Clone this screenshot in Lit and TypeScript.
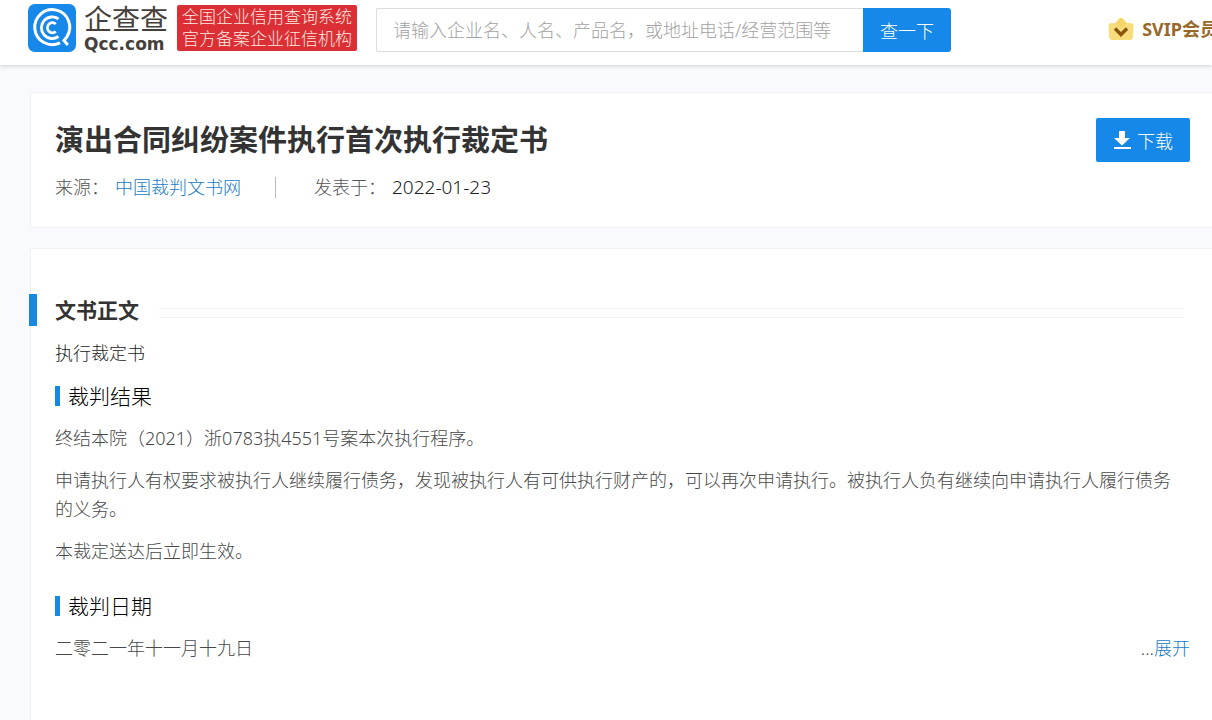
import { LitElement, html, css } from "lit";
import { customElement } from "lit/decorators.js";

@customElement("site-header")
class SiteHeader extends LitElement {
  static styles = css`
    :host {
      display: block;
      position: relative;
    }
    .bar {
      display: flex;
      align-items: flex-start;
      height: 65px;
      padding-left: 28px;
      box-sizing: border-box;
      background: #fff;
      box-shadow: 0 1px 4px rgba(60, 70, 90, 0.24);
      overflow: hidden;
      white-space: nowrap;
    }
    .brand {
      display: flex;
      gap: 8px;
      padding-top: 4px;
      color: #45403c;
      text-decoration: none;
      flex: none;
    }
    .mark {
      width: 48px;
      height: 48px;
    }
    .wordmark {
      display: flex;
      flex-direction: column;
      width: 85px;
    }
    .name {
      font-size: 28px;
      line-height: 31px;
      font-weight: 400;
    }
    .domain {
      font: 700 17px/18px "DejaVu Sans", sans-serif;
    }
    .slogan {
      margin-top: 1px;
      height: 46px;
      padding: 1px 5px;
      box-sizing: border-box;
      border-radius: 2px;
      background: #dc2f35;
      color: #ffe9e0;
      font-size: 17px;
      line-height: 22px;
      flex: none;
    }
    .search {
      display: flex;
      flex: 0 1 575px;
      min-width: 0;
      height: 44px;
      margin: 8px 0 0 19px;
    }
    .field {
      flex: 1;
      min-width: 0;
      box-sizing: border-box;
      padding: 0 16px;
      border: 1px solid #dcdcdc;
      border-right: 0;
      border-radius: 2px 0 0 2px;
      background: #fff;
      color: #333;
      font: inherit;
      font-size: 18px;
      outline: none;
    }
    .field::placeholder {
      color: #a2a2a2;
      opacity: 1;
    }
    .go {
      width: 88px;
      padding: 0;
      border: 0;
      border-radius: 0 3px 3px 0;
      background: #1688e9;
      color: #fff;
      font: inherit;
      font-size: 18px;
    }
    .svip {
      display: flex;
      align-items: center;
      gap: 8px;
      height: 56px;
      margin-left: auto;
      margin-right: -6px;
      color: #97692b;
      font-size: 18px;
      font-weight: 700;
      text-decoration: none;
      flex: none;
    }
    .crown {
      width: 26px;
      height: 26px;
    }
  `;

  render() {
    return html`
      <header class="bar">
        <a class="brand" href="#">
          <svg class="mark" viewBox="0 0 48 48" aria-hidden="true">
            <rect width="48" height="48" rx="7" fill="#1688e9" />
            <g fill="none" stroke="#fff">
              <path d="M32 38.800A17.500 17.500 0 1 1 38.800 32.800L36 36.500L39.800 41" stroke-width="3" />
              <path d="M30.500 15A10.800 10.800 0 1 0 30.500 32.500" stroke-width="2.800" />
              <path d="M27.800 20A5 5 0 1 0 27.800 27.500" stroke-width="2.800" />
            </g>
          </svg>
          <span class="wordmark">
            <span class="name">企查查</span>
            <span class="domain">Qcc.com</span>
          </span>
          <span class="slogan">全国企业信用查询系统<br />官方备案企业征信机构</span>
        </a>
        <form class="search" @submit=${(e: Event) => e.preventDefault()}>
          <input
            class="field"
            type="text"
            aria-label="搜索"
            placeholder="请输入企业名、人名、产品名，或地址电话/经营范围等"
          />
          <button class="go" type="submit">查一下</button>
        </form>
        <a class="svip" href="#">
          <svg class="crown" viewBox="0 0 26 26" aria-hidden="true">
            <path
              d="M0.500 10Q0.500 8.500 2 8.300L7.500 8L11.500 3.500Q13 2 14.500 3.500L18.500 8L24 8.300Q25.500 8.500 25.500 10L25 22Q24.500 25 21.500 25H4.500Q1.500 25 1 22Z"
              fill="#f9dc7c"
            />
            <path d="M7.500 8L11.500 3.500Q13 2 14.500 3.500L18.500 8L13 13Z" fill="#f6d566" />
            <path d="M7 13.500L13 19.500L19 13.500" fill="none" stroke="#885510" stroke-width="3.400" />
          </svg>
          SVIP会员
        </a>
      </header>
    `;
  }
}

@customElement("document-summary")
class DocumentSummary extends LitElement {
  static styles = css`
    :host {
      display: block;
    }
    .card {
      display: flex;
      justify-content: space-between;
      align-items: flex-start;
      padding: 25px 22px 25px 24px;
      border: 1px solid #eff1f4;
      border-right: 0;
      background: #fff;
    }
    .title {
      margin: 0;
      color: #333;
      font-size: 29px;
      line-height: 44px;
      font-weight: 700;
    }
    .meta {
      display: flex;
      align-items: center;
      margin-top: 10px;
      font-size: 18px;
      line-height: 30px;
      color: #555;
    }
    .source {
      margin-left: 6px;
      color: #1a7cc6;
      text-decoration: none;
    }
    .rule {
      width: 1px;
      height: 21px;
      margin: 0 38px 0 34px;
      background: #bbb;
    }
    .date {
      margin-left: 6px;
      color: #222;
      font-size: 19px;
    }
    .download {
      display: flex;
      align-items: center;
      justify-content: center;
      gap: 6px;
      width: 94px;
      height: 44px;
      padding: 0;
      border: 0;
      border-radius: 2px;
      background: #1688e9;
      color: #fff;
      font: inherit;
      font-size: 18px;
      flex: none;
    }
    .arrow {
      width: 18px;
      height: 18px;
    }
  `;

  render() {
    return html`
      <section class="card">
        <div>
          <h1 class="title">演出合同纠纷案件执行首次执行裁定书</h1>
          <div class="meta">
            <span>来源：</span>
            <a class="source" href="#">中国裁判文书网</a>
            <span class="rule"></span>
            <span>发表于：</span>
            <time class="date" datetime="2022-01-23">2022-01-23</time>
          </div>
        </div>
        <button class="download" type="button">
          <svg class="arrow" viewBox="0 0 18 18" aria-hidden="true">
            <path d="M6 0H12V7H17L9 14.500L1 7H6ZM1 16H18V18H1Z" fill="#fff" />
          </svg>
          下载
        </button>
      </section>
    `;
  }
}

@customElement("document-body")
class DocumentBody extends LitElement {
  static styles = css`
    :host {
      display: block;
    }
    .card {
      min-height: calc(100vh - 248px);
      box-sizing: border-box;
      padding: 45px 22px 40px 24px;
      border: 1px solid #eff1f4;
      border-width: 1px 0 0 1px;
      background: #fff;
    }
    .heading {
      display: flex;
      align-items: center;
      gap: 20px;
      margin: 0 6px 0 -26px;
    }
    .heading::before {
      content: "";
      width: 8px;
      height: 32px;
      margin-right: -2px;
      background: #1688e0;
    }
    .heading::after {
      content: "";
      flex: 1;
      height: 8px;
      margin-top: 5px;
      border: solid #f1f2f3;
      border-width: 1px 0;
    }
    .h2 {
      margin: 0;
      color: #333;
      font-size: 21px;
      line-height: 32px;
      font-weight: 700;
    }
    .h3 {
      display: flex;
      align-items: center;
      gap: 8px;
      margin: 11px 0 12px;
      color: #000;
      font-size: 21px;
      line-height: 32px;
      font-weight: 300;
    }
    .h3::before {
      content: "";
      width: 5px;
      height: 20px;
      background: #1688e0;
    }
    .text {
      margin: 0 6px 13px 0;
      color: #484848;
      font-size: 18px;
      line-height: 29px;
    }
    .lead {
      margin: 11px 0 0;
      color: #222;
      font-size: 18px;
      line-height: 32px;
    }
    .last {
      display: flex;
      justify-content: space-between;
      color: #484848;
      font-size: 18px;
      line-height: 29px;
    }
    .more {
      color: #1a7cc6;
      text-decoration: none;
    }
    .later {
      margin-top: 24px;
    }
  `;

  render() {
    return html`
      <article class="card">
        <div class="heading"><h2 class="h2">文书正文</h2></div>
        <p class="lead">执行裁定书</p>
        <h3 class="h3">裁判结果</h3>
        <p class="text">终结本院（2021）浙0783执4551号案本次执行程序。</p>
        <p class="text">
          申请执行人有权要求被执行人继续履行债务，发现被执行人有可供执行财产的，可以再次申请执行。被执行人负有继续向申请执行人履行债务的义务。
        </p>
        <p class="text">本裁定送达后立即生效。</p>
        <h3 class="h3 later">裁判日期</h3>
        <div class="last">
          <span>二零二一年十一月十九日</span>
          <span>...<a class="more" href="#">展开</a></span>
        </div>
      </article>
    `;
  }
}

@customElement("app-root")
class AppRoot extends LitElement {
  static styles = css`
    :host {
      display: block;
      min-height: 100vh;
      background: #f9fafd;
      font-family: "Noto Sans", "Noto Sans CJK SC", sans-serif;
      font-weight: 300;
    }
    .page {
      display: flex;
      flex-direction: column;
      gap: 20px;
      padding: 27px 0 0 30px;
    }
  `;

  render() {
    return html`
      <site-header></site-header>
      <main class="page">
        <document-summary></document-summary>
        <document-body></document-body>
      </main>
    `;
  }
}
